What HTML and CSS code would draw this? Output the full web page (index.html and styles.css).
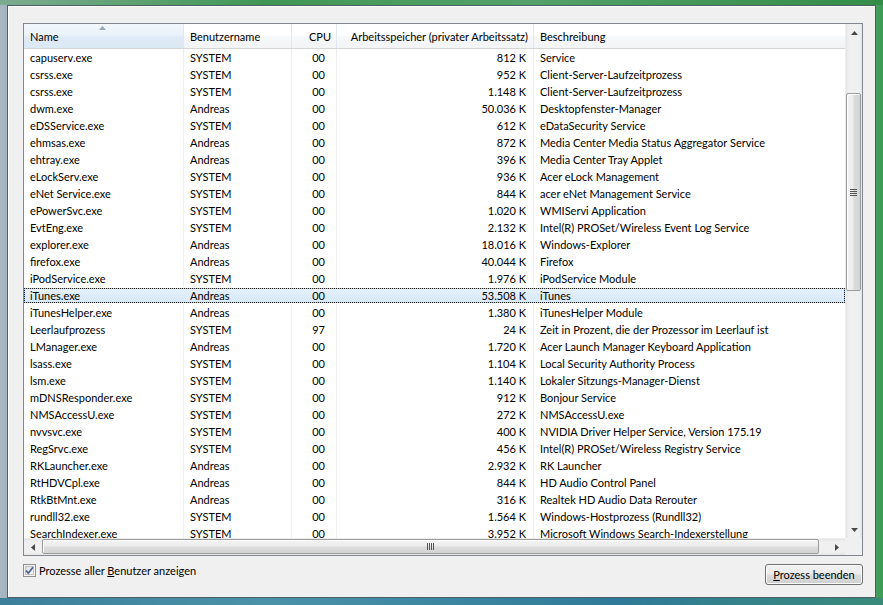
FILE: index.html
```html
<!DOCTYPE html>
<html lang="de">
<head>
<meta charset="utf-8">
<title>Prozesse</title>
<link rel="stylesheet" href="styles.css">
</head>
<body>
<div class="frame">
  <div class="panel">
    <div class="listbox">
      <div class="viewport">
        <div class="table">
          <div class="row head">
            <div class="c sorted">Name<svg class="sortarrow" width="7" height="4" viewBox="0 0 7 4"><path d="M3.5 0 L7 4 L0 4 Z" fill="#97a6ba"/></svg></div>
            <div class="c">Benutzername</div>
            <div class="c r">CPU</div>
            <div class="c r">Arbeitsspeicher (privater Arbeitssatz)</div>
            <div class="c">Beschreibung</div>
          </div>
          <div class="row"><div class="c">capuserv.exe</div><div class="c">SYSTEM</div><div class="c r">00</div><div class="c r">812 K</div><div class="c">Service</div></div>
          <div class="row"><div class="c">csrss.exe</div><div class="c">SYSTEM</div><div class="c r">00</div><div class="c r">952 K</div><div class="c">Client-Server-Laufzeitprozess</div></div>
          <div class="row"><div class="c">csrss.exe</div><div class="c">SYSTEM</div><div class="c r">00</div><div class="c r">1.148 K</div><div class="c">Client-Server-Laufzeitprozess</div></div>
          <div class="row"><div class="c">dwm.exe</div><div class="c">Andreas</div><div class="c r">00</div><div class="c r">50.036 K</div><div class="c">Desktopfenster-Manager</div></div>
          <div class="row"><div class="c">eDSService.exe</div><div class="c">SYSTEM</div><div class="c r">00</div><div class="c r">612 K</div><div class="c">eDataSecurity Service</div></div>
          <div class="row"><div class="c">ehmsas.exe</div><div class="c">Andreas</div><div class="c r">00</div><div class="c r">872 K</div><div class="c">Media Center Media Status Aggregator Service</div></div>
          <div class="row"><div class="c">ehtray.exe</div><div class="c">Andreas</div><div class="c r">00</div><div class="c r">396 K</div><div class="c">Media Center Tray Applet</div></div>
          <div class="row"><div class="c">eLockServ.exe</div><div class="c">SYSTEM</div><div class="c r">00</div><div class="c r">936 K</div><div class="c">Acer eLock Management</div></div>
          <div class="row"><div class="c">eNet Service.exe</div><div class="c">SYSTEM</div><div class="c r">00</div><div class="c r">844 K</div><div class="c">acer eNet Management Service</div></div>
          <div class="row"><div class="c">ePowerSvc.exe</div><div class="c">SYSTEM</div><div class="c r">00</div><div class="c r">1.020 K</div><div class="c">WMIServi Application</div></div>
          <div class="row"><div class="c">EvtEng.exe</div><div class="c">SYSTEM</div><div class="c r">00</div><div class="c r">2.132 K</div><div class="c">Intel(R) PROSet/Wireless Event Log Service</div></div>
          <div class="row"><div class="c">explorer.exe</div><div class="c">Andreas</div><div class="c r">00</div><div class="c r">18.016 K</div><div class="c">Windows-Explorer</div></div>
          <div class="row"><div class="c">firefox.exe</div><div class="c">Andreas</div><div class="c r">00</div><div class="c r">40.044 K</div><div class="c">Firefox</div></div>
          <div class="row"><div class="c">iPodService.exe</div><div class="c">SYSTEM</div><div class="c r">00</div><div class="c r">1.976 K</div><div class="c">iPodService Module</div></div>
          <div class="row selected"><div class="c">iTunes.exe</div><div class="c">Andreas</div><div class="c r">00</div><div class="c r">53.508 K</div><div class="c">iTunes</div></div>
          <div class="row"><div class="c">iTunesHelper.exe</div><div class="c">Andreas</div><div class="c r">00</div><div class="c r">1.380 K</div><div class="c">iTunesHelper Module</div></div>
          <div class="row"><div class="c">Leerlaufprozess</div><div class="c">SYSTEM</div><div class="c r">97</div><div class="c r">24 K</div><div class="c">Zeit in Prozent, die der Prozessor im Leerlauf ist</div></div>
          <div class="row"><div class="c">LManager.exe</div><div class="c">Andreas</div><div class="c r">00</div><div class="c r">1.720 K</div><div class="c">Acer Launch Manager Keyboard Application</div></div>
          <div class="row"><div class="c">lsass.exe</div><div class="c">SYSTEM</div><div class="c r">00</div><div class="c r">1.104 K</div><div class="c">Local Security Authority Process</div></div>
          <div class="row"><div class="c">lsm.exe</div><div class="c">SYSTEM</div><div class="c r">00</div><div class="c r">1.140 K</div><div class="c">Lokaler Sitzungs-Manager-Dienst</div></div>
          <div class="row"><div class="c">mDNSResponder.exe</div><div class="c">SYSTEM</div><div class="c r">00</div><div class="c r">912 K</div><div class="c">Bonjour Service</div></div>
          <div class="row"><div class="c">NMSAccessU.exe</div><div class="c">SYSTEM</div><div class="c r">00</div><div class="c r">272 K</div><div class="c">NMSAccessU.exe</div></div>
          <div class="row"><div class="c">nvvsvc.exe</div><div class="c">SYSTEM</div><div class="c r">00</div><div class="c r">400 K</div><div class="c">NVIDIA Driver Helper Service, Version 175.19</div></div>
          <div class="row"><div class="c">RegSrvc.exe</div><div class="c">SYSTEM</div><div class="c r">00</div><div class="c r">456 K</div><div class="c">Intel(R) PROSet/Wireless Registry Service</div></div>
          <div class="row"><div class="c">RKLauncher.exe</div><div class="c">Andreas</div><div class="c r">00</div><div class="c r">2.932 K</div><div class="c">RK Launcher</div></div>
          <div class="row"><div class="c">RtHDVCpl.exe</div><div class="c">Andreas</div><div class="c r">00</div><div class="c r">844 K</div><div class="c">HD Audio Control Panel</div></div>
          <div class="row"><div class="c">RtkBtMnt.exe</div><div class="c">Andreas</div><div class="c r">00</div><div class="c r">316 K</div><div class="c">Realtek HD Audio Data Rerouter</div></div>
          <div class="row"><div class="c">rundll32.exe</div><div class="c">SYSTEM</div><div class="c r">00</div><div class="c r">1.564 K</div><div class="c">Windows-Hostprozess (Rundll32)</div></div>
          <div class="row"><div class="c">SearchIndexer.exe</div><div class="c">SYSTEM</div><div class="c r">00</div><div class="c r">3.952 K</div><div class="c">Microsoft Windows Search-Indexerstellung</div></div>
        </div>
      </div>
      <div class="vscroll">
        <div class="sbtn"><svg width="7" height="4" viewBox="0 0 7 4"><path d="M3.5 0 L7 4 L0 4 Z" fill="#4a4a4a"/></svg></div>
        <div class="vtrack">
          <div class="vthumb"><span class="grip-v"></span></div>
        </div>
        <div class="sbtn"><svg width="7" height="4" viewBox="0 0 7 4"><path d="M0 0 L7 0 L3.5 4 Z" fill="#4a4a4a"/></svg></div>
      </div>
      <div class="hscroll">
        <div class="sbtn"><svg width="4" height="7" viewBox="0 0 4 7"><path d="M0 3.5 L4 0 L4 7 Z" fill="#4a4a4a"/></svg></div>
        <div class="htrack">
          <div class="hthumb"><span class="grip-h"></span></div>
        </div>
        <div class="sbtn"><svg width="4" height="7" viewBox="0 0 4 7"><path d="M0 0 L4 3.5 L0 7 Z" fill="#4a4a4a"/></svg></div>
      </div>
      <div class="corner"></div>
    </div>
    <div class="footer">
      <label class="check">
        <svg class="box" width="13" height="13" viewBox="0 0 13 13">
          <defs>
            <linearGradient id="cb" x1="0" y1="0" x2="1" y2="1">
              <stop offset="0" stop-color="#dcdcdc"/>
              <stop offset="1" stop-color="#fbfbfb"/>
            </linearGradient>
          </defs>
          <rect x="0.5" y="0.5" width="12" height="12" fill="#f4f4f4" stroke="#8e8f8f"/>
          <rect x="2.5" y="2.5" width="8" height="8" fill="url(#cb)" stroke="#c3c3c3"/>
          <path d="M3 6.5 L5.3 9.2 L10 3.2" fill="none" stroke="#4a5f97" stroke-width="1.7"/>
        </svg>
        <span>Prozesse aller <u>B</u>enutzer anzeigen</span>
      </label>
      <button class="btn" type="button"><u>P</u>rozess beenden</button>
    </div>
  </div>
</div>
</body>
</html>
```
FILE: styles.css
```css
html, body {
  margin: 0;
  padding: 0;
}
body {
  width: 883px;
  height: 605px;
  overflow: hidden;
  font-family: Lato, "Open Sans", sans-serif;
  font-size: 11px;
  color: #000;
}
.frame {
  box-sizing: border-box;
  width: 883px;
  height: 605px;
  padding: 5px 7px 7px 7px;
  background:
    linear-gradient(to right, rgba(120,170,140,0.9) 0, rgba(60,150,80,0.95) 30%, rgba(80,160,100,0.9) 60%, rgba(50,140,70,0.95) 100%) top / 100% 5px no-repeat,
    linear-gradient(to right, #3c7f9a 0, #4a92a8 30%, #2f7a98 70%, #3a8a7a 100%) bottom / 100% 7px no-repeat,
    linear-gradient(to right, #a8b6c2 0, #a3b5bf 1%, #5aa57a 98%, #3a9a52 100%);
}
.panel {
  box-sizing: border-box;
  width: 869px;
  height: 593px;
  border: 1px solid #4f5d68;
  background: #f0f0f0;
  box-shadow: inset 1px 1px 0 #ffffff;
  padding: 17px 12px 0 15px;
  display: flex;
  flex-direction: column;
}
.listbox {
  box-sizing: border-box;
  width: 840px;
  height: 533px;
  border: 1px solid #828790;
  background: #fff;
  display: grid;
  grid-template-columns: 821px 17px;
  grid-template-rows: 514px 17px;
}
.viewport {
  overflow: hidden;
}
.table {
  width: 821px;
}
.row {
  display: grid;
  grid-template-columns: 159px 108px 45px 197px 1fr;
  height: 17px;
  line-height: 17px;
  white-space: nowrap;
}
.row .c {
  padding: 0 6px;
  overflow: hidden;
  border-left: 1px solid #efefef;
}
.row .c:first-child {
  border-left: 0;
}
.row .c.r {
  text-align: right;
}
.row .c:nth-child(3) {
  padding-right: 11px;
}
.row .c:nth-child(4) {
  padding-right: 7px;
}
.row.head {
  height: 24px;
  line-height: 24px;
  border-bottom: 1px solid #d5d5d5;
  background: linear-gradient(to bottom, #ffffff 0, #ffffff 45%, #f6f7f8 55%, #f3f4f6 100%);
  position: relative;
}
.row.head .c {
  border-left: 1px solid #e3e8ee;
  padding-top: 1px;
  position: relative;
}
.row.head .c:first-child {
  border-left: 0;
}
.row.head .c:nth-child(3) {
  padding-right: 5px;
}
.row.head .c:nth-child(4) {
  padding-right: 5px;
}
.row.head .c.sorted {
  background: linear-gradient(to bottom, #f2f8fc 0, #eaf3fa 45%, #dfebf6 55%, #dbe9f5 100%);
}
.sortarrow {
  position: absolute;
  left: 75px;
  top: 2px;
}
.row.selected {
  height: 15px;
  line-height: 15px;
  margin: 1px 0;
  background: linear-gradient(to bottom, #e6f1fb 0, #d6e8f9 100%);
  outline: 1px dotted #222;
  outline-offset: -1px;
  box-shadow: inset 0 0 0 1px #a5c7ee;
}
.row.selected .c {
  border-left-color: transparent;
}

/* scrollbars */
.vscroll {
  grid-column: 2;
  grid-row: 1;
  display: flex;
  flex-direction: column;
  background: linear-gradient(to right, #e6e6e6 0, #f0f0f0 20%, #f0f0f0 80%, #e6e6e6 100%);
  border-left: 1px solid #ededed;
}
.hscroll {
  grid-column: 1;
  grid-row: 2;
  display: flex;
  background: linear-gradient(to bottom, #e6e6e6 0, #f0f0f0 20%, #f0f0f0 80%, #e6e6e6 100%);
  border-top: 1px solid #ededed;
}
.corner {
  grid-column: 2;
  grid-row: 2;
  background: #f0f0f0;
}
.sbtn {
  width: 17px;
  height: 17px;
  flex: none;
  display: flex;
  align-items: center;
  justify-content: center;
}
.vscroll .sbtn { width: 16px; }
.hscroll .sbtn { height: 16px; }
.vtrack {
  flex: 1;
  padding-top: 52px;
}
.vthumb {
  box-sizing: border-box;
  width: 15px;
  height: 198px;
  margin-left: 0;
  border: 1px solid #9b9b9b;
  border-radius: 2px;
  background: linear-gradient(to right, #f3f3f3 0, #ececec 45%, #dcdcdc 55%, #d4d4d4 100%);
  box-shadow: inset 1px 1px 0 #fff;
  display: flex;
  align-items: center;
  justify-content: center;
}
.grip-v {
  width: 7px;
  height: 7px;
  background: repeating-linear-gradient(to bottom, #555 0, #555 1px, transparent 1px, transparent 2px);
}
.htrack {
  flex: 1;
  padding-left: 1px;
  padding-right: 9px;
}
.hthumb {
  box-sizing: border-box;
  height: 15px;
  border: 1px solid #9b9b9b;
  border-radius: 2px;
  background: linear-gradient(to bottom, #f3f3f3 0, #ececec 45%, #dcdcdc 55%, #d4d4d4 100%);
  box-shadow: inset 1px 1px 0 #fff;
  display: flex;
  align-items: center;
  justify-content: center;
}
.grip-h {
  width: 7px;
  height: 7px;
  background: repeating-linear-gradient(to right, #555 0, #555 1px, transparent 1px, transparent 2px);
}

/* footer */
.footer {
  display: flex;
  justify-content: space-between;
  align-items: flex-start;
  margin-top: 8px;
}
.check {
  display: flex;
  align-items: center;
  gap: 3px;
  line-height: 13px;
  font-size: 11px;
}
.check .box {
  display: block;
  flex: none;
}
.btn {
  box-sizing: border-box;
  width: 98px;
  height: 21px;
  margin-right: 0;
  font-family: inherit;
  font-size: 11px;
  color: #000;
  padding: 0;
  border: 1px solid #707070;
  border-radius: 3px;
  background: linear-gradient(to bottom, #f2f2f2 0, #ebebeb 48%, #dddddd 52%, #cfcfcf 100%);
  box-shadow: inset 0 0 0 1px #fcfcfc;
}
```
